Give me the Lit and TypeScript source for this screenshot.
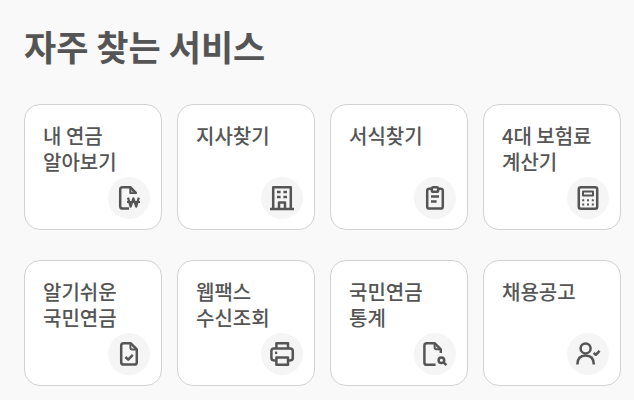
import { LitElement, html, css, svg } from "lit";
import { customElement } from "lit/decorators.js";

// Each icon is drawn on a 42 x 42 grid, the size of its round badge.
const icons = {
  won: svg`
    <path d="M21 31.6H14.6Q12.2 31.6 12.2 29.2V12.6Q12.2 10.2 14.6 10.2H22.4L28.2 16.4"/>
    <path d="M22.2 10.4V16.2H28Z" class="solid"/>
    <path d="M20 20.6L22.6 29.6L25.4 21.4L28.2 29.6L30.8 20.6M19 25H32" class="won"/>`,
  building: svg`
    <path d="M12.2 32V10.2H29.8V32M9 32H33M18 32V25.6H24V32"/>
    <path d="M16 15H19.6M22.4 15H26M16 20H19.6M22.4 20H26"/>`,
  clipboard: svg`
    <path d="M17.6 11.8H15.4Q13.2 11.8 13.2 14V29.4Q13.2 31.6 15.4 31.6H26.6Q28.8 31.6 28.8 29.4V14Q28.8 11.8 26.6 11.8H24.4"/>
    <rect x="17.8" y="10.2" width="6.4" height="4.6" rx="1.6"/>
    <path d="M17 19.4H25M17 24.4H22.6"/>`,
  calculator: svg`
    <rect x="11.8" y="10.2" width="18.4" height="21.6" rx="2"/>
    <rect x="16" y="14.6" width="10" height="4" class="mid"/>
    <path d="M15.2 23.2H17.2M20 23.2H22M24.8 23.2H26.8M15.2 27.6H17.2M20 27.6H22M24.8 27.6H26.8" class="mid"/>`,
  docCheck: svg`
    <path d="M22.6 10.2H15.6Q13.2 10.2 13.2 12.6V29.2Q13.2 31.6 15.6 31.6H26.4Q28.8 31.6 28.8 29.2V16.4Z"/>
    <path d="M22.4 10.6V14.6Q22.4 16.6 24.4 16.6H28.4" class="mid"/>
    <path d="M17.4 24L20.2 26.6L24.8 21.8"/>`,
  printer: svg`
    <path d="M15.4 15.4V10.2H27V15.4"/>
    <path d="M15.2 27.4H13Q10.4 27.4 10.4 24.8V18Q10.4 15.4 13 15.4H29.2Q31.8 15.4 31.8 18V24.8Q31.8 27.4 29.2 27.4H27.2"/>
    <rect x="15.4" y="24.6" width="11.6" height="7.2"/>
    <path d="M14 19.8H16.2"/>`,
  docSearch: svg`
    <path d="M21.6 31.8H12.8Q10.4 31.8 10.4 29.4V12.6Q10.4 10.2 12.8 10.2H20.6L26.8 16.4V20"/>
    <path d="M20.6 10.6V14.2Q20.6 16.2 22.6 16.2H26.4" class="mid"/>
    <circle cx="27.4" cy="27.2" r="2.8"/>
    <path d="M29.4 29.2L32.4 32.2"/>`,
  userCheck: svg`
    <circle cx="18.6" cy="15.4" r="5"/>
    <path d="M10.4 31.4Q10.4 22.4 18.6 22.4Q26.8 22.4 26.8 31.4"/>
    <path d="M26.6 19.8L28.8 21.8L32.6 17.8"/>`,
};

const services = [
  { lines: ["내 연금", "알아보기"], icon: icons.won },
  { lines: ["지사찾기"], icon: icons.building },
  { lines: ["서식찾기"], icon: icons.clipboard },
  { lines: ["4대 보험료", "계산기"], icon: icons.calculator },
  { lines: ["알기쉬운", "국민연금"], icon: icons.docCheck },
  { lines: ["웹팩스", "수신조회"], icon: icons.printer },
  { lines: ["국민연금", "통계"], icon: icons.docSearch },
  { lines: ["채용공고"], icon: icons.userCheck },
];

@customElement("app-root")
export class AppRoot extends LitElement {
  static styles = css`
    :host {
      display: block;
      box-sizing: border-box;
      min-height: 100vh;
      padding: 18px 13px 14px 24px;
      background: #f9f9f9;
      color: #555;
      font-family: "Noto Sans CJK KR", "Noto Sans", sans-serif;
    }
    .title {
      margin: 0 0 30px;
      font-size: 35px;
      line-height: 56px;
      font-weight: 700;
    }
    .grid {
      display: grid;
      grid-template-columns: repeat(4, minmax(0, 1fr));
      gap: 30px 15px;
      margin: 0;
      padding: 0;
      list-style: none;
    }
    .item {
      display: grid;
    }
    .card {
      display: flex;
      flex-direction: column;
      justify-content: space-between;
      box-sizing: border-box;
      min-height: 126px;
      padding: 18px 11px 10px 18px;
      border: 1px solid #d2d2d2;
      border-radius: 16px;
      background: #fff;
      color: #555;
      font-size: 20px;
      font-weight: 500;
      line-height: 26px;
      text-decoration: none;
    }
    .label {
      white-space: pre-line;
    }
    .badge {
      align-self: flex-end;
      width: 42px;
      height: 42px;
      border-radius: 50%;
      background: #f5f5f5;
    }
    .icon {
      display: block;
      fill: none;
      stroke: #555;
      stroke-width: 2.5;
      stroke-linejoin: round;
    }
    .solid {
      fill: #555;
      fill-opacity: 0.4;
      stroke-width: 1.8;
    }
    .mid {
      stroke-width: 2;
    }
    .won {
      stroke-width: 2.2;
    }
  `;

  render() {
    return html`
      <h2 class="title">자주 찾는 서비스</h2>
      <ul class="grid">
        ${services.map(
          (s) => html`<li class="item">
            <a class="card" href="#">
              <span class="label">${s.lines.join("\n")}</span>
              <span class="badge">
                <svg class="icon" viewBox="0 0 42 42" width="42" height="42" aria-hidden="true">${s.icon}</svg>
              </span>
            </a>
          </li>`
        )}
      </ul>
    `;
  }
}
